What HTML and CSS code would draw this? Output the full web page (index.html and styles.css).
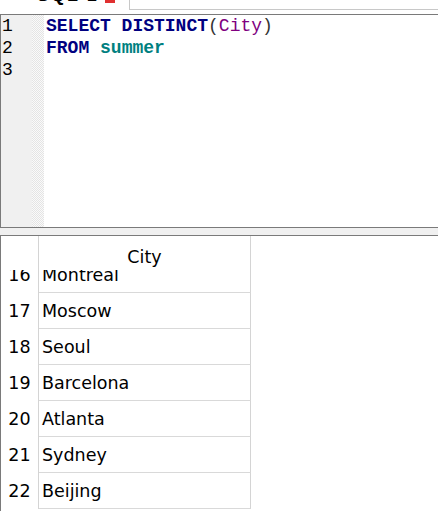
FILE: index.html
```html
<!DOCTYPE html>
<html>
<head>
<meta charset="utf-8">
<link rel="stylesheet" href="styles.css">
</head>
<body>
<div class="tabs">
  <div class="tab"><span class="tab-label">SQL 1</span><span class="tab-close"></span></div>
  <div class="tab-rest"></div>
</div>
<div class="editor">
  <div class="gutter">
    <div class="nums"><div>1</div><div>2</div><div>3</div></div>
    <div class="fold"></div>
  </div>
  <div class="code">
    <div class="line"><span class="kw">SELECT DISTINCT</span><span class="p">(</span><span class="fn">City</span><span class="p">)</span></div>
    <div class="line"><span class="kw">FROM</span> <span class="tbl">summer</span></div>
    <div class="line"> </div>
  </div>
</div>
<div class="splitter"></div>
<div class="results">
  <div class="grid">
    <div class="head">
      <div class="rh"></div>
      <div class="hc">City</div>
    </div>
    <div class="body">
      <div class="row first"><div class="rn">16</div><div class="cell">Montreal</div></div>
      <div class="row"><div class="rn">17</div><div class="cell">Moscow</div></div>
      <div class="row"><div class="rn">18</div><div class="cell">Seoul</div></div>
      <div class="row"><div class="rn">19</div><div class="cell">Barcelona</div></div>
      <div class="row"><div class="rn">20</div><div class="cell">Atlanta</div></div>
      <div class="row"><div class="rn">21</div><div class="cell">Sydney</div></div>
      <div class="row"><div class="rn">22</div><div class="cell">Beijing</div></div>
    </div>
  </div>
</div>
</body>
</html>
```
FILE: styles.css
```css
html, body {
  margin: 0;
  padding: 0;
  background: #ffffff;
  width: 438px;
  height: 511px;
  overflow: hidden;
}

.tabs {
  display: flex;
  height: 14px;
  overflow: hidden;
}

.tab {
  width: 129px;
  flex: none;
  display: flex;
  align-items: flex-start;
  padding-left: 37px;
  box-sizing: border-box;
}

.tab-label {
  font-family: "Liberation Sans", sans-serif;
  font-weight: bold;
  font-size: 18px;
  line-height: 18px;
  margin-top: -14px;
  color: #000;
  letter-spacing: 2px;
}

.tab-close {
  width: 10px;
  height: 3px;
  background: #e03030;
  margin-left: 6px;
}

.tab-rest {
  flex: 1;
  height: 9px;
  border-left: 1px solid #c8c8c8;
  border-bottom: 1px solid #c8c8c8;
}

.editor {
  display: flex;
  align-items: stretch;
  height: 214px;
  box-sizing: border-box;
  border-top: 1px solid #7a7a7a;
  border-left: 1px solid #7a7a7a;
  border-bottom: 1px solid #7a7a7a;
}

.gutter {
  display: flex;
  width: 43px;
  flex: none;
}

.nums {
  width: 31px;
  background: #f0f0f0;
  font-family: "Liberation Mono", monospace;
  font-size: 18px;
  line-height: 22px;
  color: #000;
  padding-left: 1px;
  box-sizing: border-box;
}

.fold {
  width: 12px;
  background: repeating-conic-gradient(#e4e4e4 0 25%, #fafafa 0 50%) 0 0 / 2px 2px;
}

.code {
  padding-left: 2px;
  font-family: "Liberation Mono", monospace;
  font-size: 18px;
  line-height: 22px;
}

.line {
  white-space: pre;
  height: 22px;
}

.kw { color: #000080; font-weight: bold; }
.p { color: #333333; }
.fn { color: #800080; }
.tbl { color: #008080; font-weight: bold; }

.splitter {
  height: 7px;
  background: #f0f0f0;
}

.results {
  height: 276px;
  box-sizing: border-box;
  border-top: 1px solid #7a7a7a;
  border-left: 1px solid #7a7a7a;
  overflow: hidden;
}

.grid {
  width: 250px;
  font-family: "DejaVu Sans", sans-serif;
  font-size: 17.5px;
  color: #000;
}

.head {
  display: flex;
  height: 34px;
  position: relative;
  z-index: 1;
  background: #fff;
}

.rh {
  width: 37px;
  border-right: 1px solid #d4d4d4;
}

.hc {
  width: 211px;
  border-right: 1px solid #d4d4d4;
  text-align: center;
  padding-top: 11px;
  line-height: 20px;
}

.body {
  overflow: hidden;
  height: 240px;
}

.row {
  display: flex;
  height: 36px;
}

.row.first {
  margin-top: -13px;
}

.rn {
  width: 37px;
  border-right: 1px solid #d4d4d4;
  text-align: center;
  padding-top: 1px;
  line-height: 34px;
}

.cell {
  width: 207px;
  padding-left: 3px;
  padding-right: 1px;
  padding-top: 1px;
  line-height: 34px;
  border-right: 1px solid #d4d4d4;
  border-bottom: 1px solid #d9d9d9;
}
```
